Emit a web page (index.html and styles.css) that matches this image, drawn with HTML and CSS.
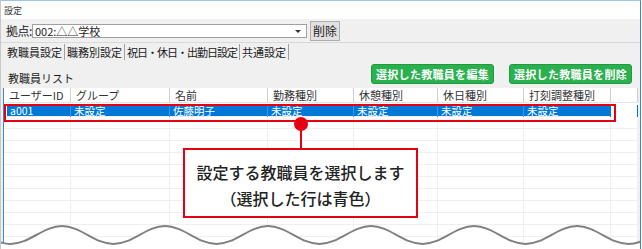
FILE: index.html
```html
<html lang="ja">
<head>
    <meta charset="UTF-8">
    <title>設定</title>
    <link rel="stylesheet" href="styles.css">
</head>
<body>
<div class="window">
    <div class="titlebar">設定</div>
    <div class="toolbar">
        <span class="label">拠点:</span>
        <div class="combo">
            <span>002:△△学校</span>
            <span class="arrow"></span>
        </div>
        <button class="btn">削除</button>
    </div>
    <div class="tabs">
        <span class="tab active">教職員設定</span>
        <span class="tab">職務別設定</span>
        <span class="tab narrow">祝日・休日・出勤日設定</span>
        <span class="tab">共通設定</span>
    </div>
    <div class="panel">
        <div class="panel-head">
            <span class="list-title">教職員リスト</span>
            <div class="actions">
                <button class="green">選択した教職員を編集</button>
                <button class="green">選択した教職員を削除</button>
            </div>
        </div>
        <div class="list">
            <div class="row head">
                <span>ユーザーID</span><span>グループ</span><span>名前</span><span>勤務種別</span><span>休憩種別</span><span>休日種別</span><span>打刻調整種別</span><span></span>
            </div>
            <div class="row selected">
                <span>a001</span><span>未設定</span><span>佐藤明子</span><span>未設定</span><span>未設定</span><span>未設定</span><span>未設定</span><span></span>
            </div>
            <div class="row"><span></span><span></span><span></span><span></span><span></span><span></span><span></span><span></span></div>
            <div class="row"><span></span><span></span><span></span><span></span><span></span><span></span><span></span><span></span></div>
            <div class="row"><span></span><span></span><span></span><span></span><span></span><span></span><span></span><span></span></div>
            <div class="row"><span></span><span></span><span></span><span></span><span></span><span></span><span></span><span></span></div>
            <div class="row"><span></span><span></span><span></span><span></span><span></span><span></span><span></span><span></span></div>
            <div class="row"><span></span><span></span><span></span><span></span><span></span><span></span><span></span><span></span></div>
            <div class="row"><span></span><span></span><span></span><span></span><span></span><span></span><span></span><span></span></div>
            <div class="row"><span></span><span></span><span></span><span></span><span></span><span></span><span></span><span></span></div>
            <div class="row"><span></span><span></span><span></span><span></span><span></span><span></span><span></span><span></span></div>
            <div class="row"><span></span><span></span><span></span><span></span><span></span><span></span><span></span><span></span></div>
            <div class="row"><span></span><span></span><span></span><span></span><span></span><span></span><span></span><span></span></div>
        </div>
    </div>

    <!-- 注釈 -->
    <div class="mark"></div>
    <div class="dot"></div>
    <div class="leader"></div>
    <div class="callout">
        <p>設定する教職員を選択します</p>
        <p>（選択した行は青色）</p>
    </div>
    <svg class="wave" width="642" height="249" viewBox="0 0 642 249">
        <path d="M -92.5 244 C -73.74 244 -59.76 226 -41 226 S -8.26 244 10.5 244 S 43.24 226 62 226 S 94.76 244 113.5 244 S 146.24 226 165 226 S 197.76 244 216.5 244 S 249.24 226 268 226 S 300.76 244 319.5 244 S 352.24 226 371 226 S 403.76 244 422.5 244 S 455.24 226 474 226 S 506.76 244 525.5 244 S 558.24 226 577 226 S 609.76 244 628.5 244 S 661.24 226 680 226 L 680 260 L -92.5 260 Z" fill="#fff" stroke="none"/>
        <path d="M -92.5 244 C -73.74 244 -59.76 226 -41 226 S -8.26 244 10.5 244 S 43.24 226 62 226 S 94.76 244 113.5 244 S 146.24 226 165 226 S 197.76 244 216.5 244 S 249.24 226 268 226 S 300.76 244 319.5 244 S 352.24 226 371 226 S 403.76 244 422.5 244 S 455.24 226 474 226 S 506.76 244 525.5 244 S 558.24 226 577 226 S 609.76 244 628.5 244 S 661.24 226 680 226" fill="none" stroke="#808080" stroke-width="2"/>
    </svg>
</div>
</body>
</html>
```

FILE: styles.css
```css
*{
    padding:0px;
    margin:0px;
    box-sizing:border-box;
}
body{
    background:#fff;
    font-family:"Noto Sans CJK JP","Noto Sans",sans-serif;
    font-size:11px;
    color:#1a1a1a;
}
.window{
    position:relative;
    width:641px;
    height:249px;
    background:#f0f0f0;
    border-top:1px solid #9cc3ea;
    border-right:1px solid #3b87d4;
    border-left:1px solid #c8c8c8;
    display:flex;
    flex-direction:column;
    overflow:hidden;
}
.titlebar{
    height:18px;
    background:#fff;
    font-size:9px;
    line-height:20px;
    padding-left:3px;
    color:#333;
}
.toolbar{
    height:25px;
    display:flex;
    align-items:center;
    padding-left:5px;
}
.toolbar .label{
    font-size:12px;
    width:26px;
    white-space:nowrap;
    letter-spacing:-0.5px;
}
.combo{
    width:275px;
    height:14px;
    margin-top:1px;
    background:#fff;
    border:1px solid #a0a0a0;
    display:flex;
    align-items:center;
    justify-content:space-between;
    font-size:11px;
    line-height:12px;
    padding-left:2px;
    white-space:nowrap;
}
.combo .arrow{
    width:0;
    height:0;
    margin-right:5px;
    border-left:3px solid transparent;
    border-right:3px solid transparent;
    border-top:3px solid #333;
}
.btn{
    margin-left:3px;
    width:30px;
    height:20px;
    border:1px solid #adadad;
    background:#e1e1e1;
    font-family:inherit;
    font-size:12px;
    color:#222;
}
.tabs{
    height:18px;
    display:flex;
    border-top:1px solid #d9d9d9;
    padding-left:4px;
}
.tab{
    font-size:11px;
    line-height:17px;
    padding:0 2px 0 2px;
    border-right:1px solid #a0a0a0;
    height:16px;
    margin-top:1px;
    white-space:nowrap;
}
.tab.narrow{
    letter-spacing:-1px;
}
.panel{
    flex:1;
    display:flex;
    flex-direction:column;
    padding:3px 2px 0 2px;
}
.panel-head{
    display:flex;
    justify-content:space-between;
    align-items:center;
    height:22px;
}
.list-title{
    padding-left:5px;
    padding-top:7px;
    font-size:11px;
}
.actions{
    display:flex;
    gap:15px;
    padding-right:6px;
}
.green{
    width:123px;
    height:20px;
    border:1px solid #1f9a3f;
    border-radius:3px;
    background:#2bb04e;
    color:#fff;
    font-family:inherit;
    font-size:11px;
    font-weight:bold;
    letter-spacing:0.3px;
}
.list{
    flex:1;
    margin-top:3px;
    background:#fff;
    border-left:1px solid #3b87d4;
}
.row{
    display:grid;
    grid-template-columns:67px 99px 98px 86px 84px 86px 87px 1fr;
    height:12px;
    border-bottom:1px solid #efefef;
}
.row span{
    border-right:1px solid #efefef;
    line-height:12px;
    padding-left:3px;
    white-space:nowrap;
}
.row.head{
    height:15px;
    border-bottom:1px solid #e5e5e5;
}
.row.head span{
    border-right:1px solid #d0d0d0;
    line-height:14px;
    padding-left:5px;
    font-size:11px;
    color:#333;
}
.row.selected{
    margin-top:2px;
    margin-left:3px;
    height:12px;
    background:#0078d7;
    color:#fff;
    grid-template-columns:64px 99px 98px 86px 84px 86px 87px 1fr;
}
.row.selected span{
    border-right:1px solid #3d95de;
    font-size:10.5px;
}
.row.selected span:nth-child(7),
.row.selected span:last-child{
    border-right-color:#0078d7;
}
.row.selected span:last-child{
    background:#fff;
}
.mark{
    position:absolute;
    left:3px;
    top:103px;
    width:612px;
    height:18px;
    border:2px solid #e60012;
}
.dot{
    position:absolute;
    left:293px;
    top:116px;
    width:14px;
    height:14px;
    border-radius:50%;
    background:#e60012;
}
.leader{
    position:absolute;
    left:299px;
    top:124px;
    width:2px;
    height:24px;
    background:#e60012;
}
.callout{
    position:absolute;
    left:182px;
    top:147px;
    width:235px;
    height:70px;
    border:2px solid #e60012;
    background:#fff;
    display:flex;
    flex-direction:column;
    justify-content:center;
    align-items:center;
    padding-top:3px;
    font-size:16px;
    font-weight:500;
    line-height:26px;
    color:#222;
}
.wave{
    position:absolute;
    left:-1px;
    top:-1px;
    pointer-events:none;
}
```
